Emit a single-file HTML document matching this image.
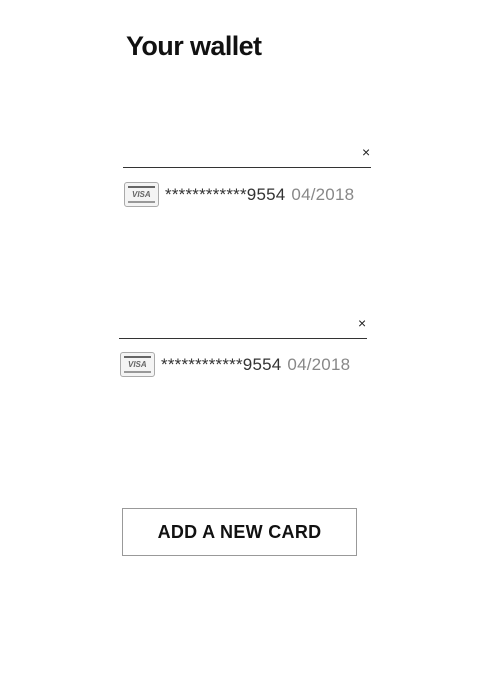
<!DOCTYPE html>
<html><head><style>
body{margin:0;width:482px;height:674px;background:#fff;font-family:"Liberation Sans",sans-serif;position:relative;overflow:hidden}
.a{position:absolute}
h1{position:absolute;left:126px;top:31px;margin:0;font-size:27px;font-weight:bold;color:#111;letter-spacing:-0.6px}
.line{height:1px;background:#333;width:248px}
.x{font-size:14px;color:#222}
.ic{width:33px;height:23px;border:1px solid #aaa;border-radius:3px;background:#f4f4f4}
.ic .b1{position:absolute;left:3px;top:3px;width:27px;height:2px;background:#666}
.ic .b2{position:absolute;left:3px;bottom:3px;width:27px;height:2px;background:#999}
.ic span{position:absolute;left:7px;top:7px;font-size:8px;font-style:italic;font-weight:bold;color:#666}
.t{font-size:17px;color:#333;letter-spacing:0.2px}
.t b{font-weight:normal;color:#888;margin-left:6px}
.btn{left:122px;top:508px;width:233px;height:46px;border:1px solid #999;text-align:center;line-height:46px;font-size:18px;font-weight:bold;color:#111;letter-spacing:0.3px}
</style></head><body>
<h1>Your wallet</h1>
<div class="a x" style="left:362px;top:144px">×</div>
<div class="a line" style="left:123px;top:167px"></div>
<div class="a ic" style="left:124px;top:182px"><div class="b1"></div><span>VISA</span><div class="b2"></div></div>
<div class="a t" style="left:165px;top:185px">************9554<b>04/2018</b></div>
<div class="a x" style="left:358px;top:315px">×</div>
<div class="a line" style="left:119px;top:338px"></div>
<div class="a ic" style="left:120px;top:352px"><div class="b1"></div><span>VISA</span><div class="b2"></div></div>
<div class="a t" style="left:161px;top:355px">************9554<b>04/2018</b></div>
<div class="a btn">ADD A NEW CARD</div>
</body></html>
